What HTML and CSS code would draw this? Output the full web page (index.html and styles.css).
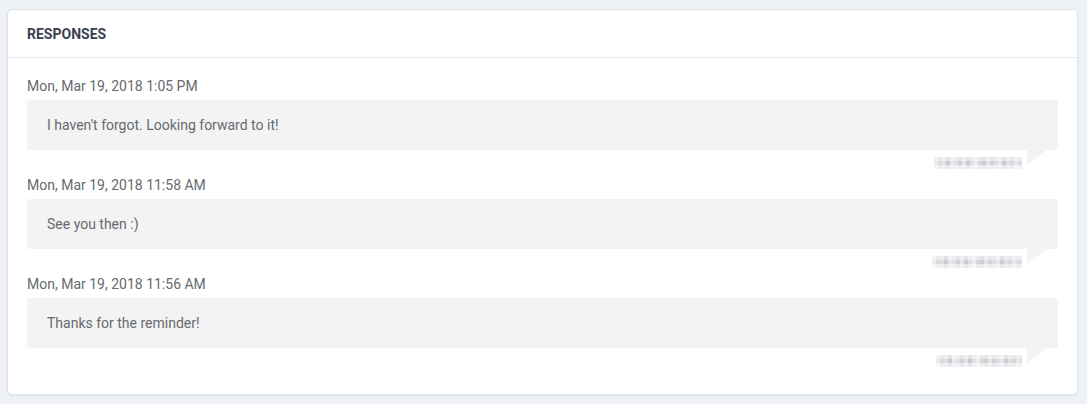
FILE: index.html
```
<!DOCTYPE html>
<html lang="en">

<head>
    <meta charset="UTF-8">
    <meta name="viewport" content="width=device-width, initial-scale=1.0">
    <title>Responses</title>
    <link rel="stylesheet" href="styles.css">
</head>

<body>
    <div class="card">
        <div class="card-header">RESPONSES</div>
        <div class="card-body">
            <div class="message">
                <div class="message-date">Mon, Mar 19, 2018 1:05 PM</div>
                <div class="bubble">I haven't forgot. Looking forward to it!</div>
                <div class="message-footer">
                    <span class="author author-a"></span>
                    <span class="tail"></span>
                </div>
            </div>
            <div class="message">
                <div class="message-date">Mon, Mar 19, 2018 11:58 AM</div>
                <div class="bubble">See you then :)</div>
                <div class="message-footer">
                    <span class="author author-b"></span>
                    <span class="tail"></span>
                </div>
            </div>
            <div class="message">
                <div class="message-date">Mon, Mar 19, 2018 11:56 AM</div>
                <div class="bubble">Thanks for the reminder!</div>
                <div class="message-footer">
                    <span class="author author-c"></span>
                    <span class="tail"></span>
                </div>
            </div>
        </div>
    </div>
</body>

</html>
```

FILE: styles.css
```
body {
    font-family: Roboto, "Liberation Sans", sans-serif;
    background: #eef2f6;
    margin: 0;
    padding: 9px 9px 9px 7px;
}

.card {
    background: #fff;
    border: 1px solid #dde3ea;
    border-radius: 5px;
    box-shadow: 0 1px 2px rgba(40, 50, 70, 0.06);
}

.card-header {
    height: 47px;
    line-height: 49px;
    padding: 0 19px;
    font-size: 14px;
    font-weight: 700;
    color: #3a3f51;
    border-bottom: 1px solid #e6e9ee;
}

.card-body {
    padding: 19px 19px 26px 19px;
}

.message {
    margin-bottom: 6px;
}

.message:last-child {
    margin-bottom: 0;
}

.message-date {
    font-size: 14px;
    line-height: 18px;
    color: #676a6f;
    margin-bottom: 5px;
}

.bubble {
    background: #f3f3f3;
    border-radius: 3px;
    height: 50px;
    line-height: 50px;
    padding: 0 20px;
    font-size: 14px;
    color: #666a70;
}

.message-footer {
    height: 20px;
    display: flex;
    justify-content: flex-end;
    align-items: flex-start;
}

.author {
    display: block;
    width: 88px;
    height: 12px;
    margin-top: 7px;
    margin-right: 5px;
    opacity: 0.75;
    background:
        linear-gradient(to bottom, rgba(255, 255, 255, 0.45) 0 33%, rgba(255, 255, 255, 0) 33% 67%, rgba(255, 255, 255, 0.55) 67%),
        linear-gradient(to right,
            #e6e4e6 0 4px, #cfcdd3 4px 8px, #d9d6dc 8px 12px, #bdb8c4 12px 16px, #e2e0e2 16px 20px,
            #d4d7de 20px 24px, #c7c2cb 24px 28px, #dddde4 28px 32px, #b9b6c3 32px 36px, #d5d8df 36px 40px,
            #e8e6e6 40px 44px, #cbc8d0 44px 48px, #c0bec9 48px 52px, #dcdbe0 52px 56px, #c8c3ca 56px 60px,
            #d0d2db 60px 64px, #e0dfe3 64px 68px, #bfbac4 68px 72px, #d6d5dc 72px 76px, #c9c7cf 76px 80px,
            #dedde3 80px 84px, #d0cfd6 84px 88px);
}

.author-b {
    width: 90px;
}

.author-c {
    width: 86px;
}

.tail {
    display: block;
    width: 0;
    height: 0;
    border-top: 15px solid #f3f3f3;
    border-right: 20px solid transparent;
    margin-right: 11px;
}
```
